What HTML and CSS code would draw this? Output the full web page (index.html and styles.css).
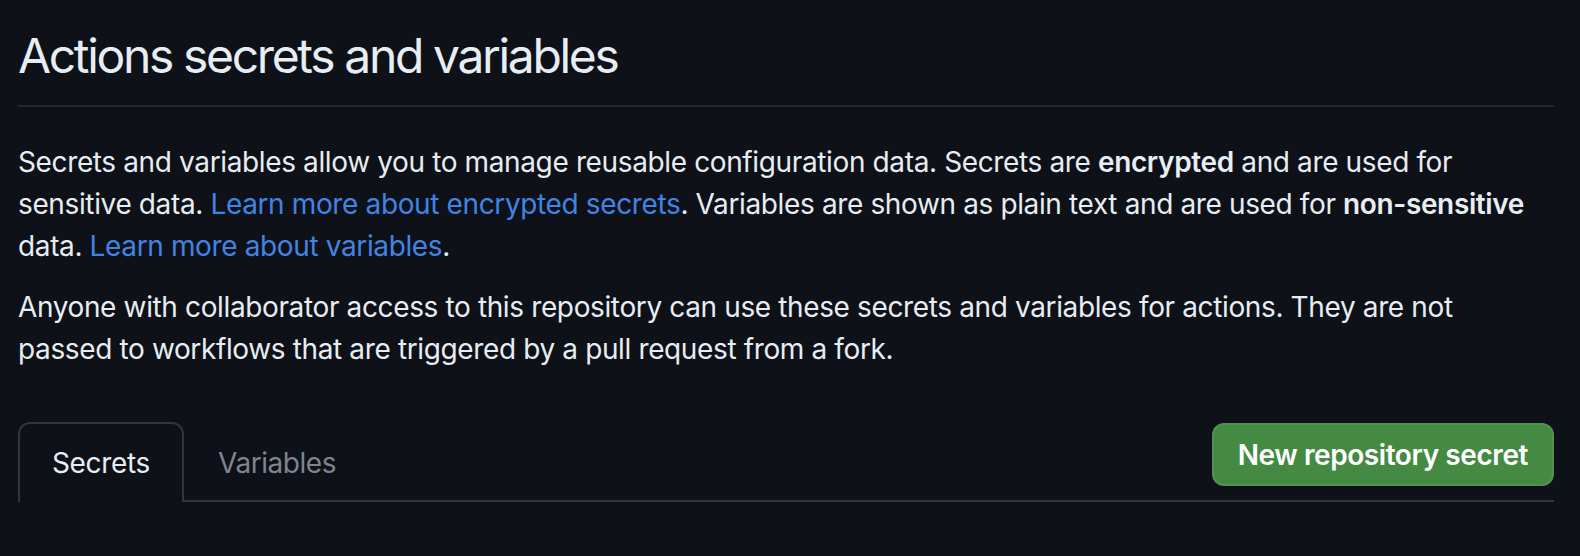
FILE: index.html
```html
<!DOCTYPE html>
<html lang="en">
<head>
<meta charset="utf-8">
<title>Actions secrets and variables</title>
<link rel="stylesheet" href="styles.css">
</head>
<body>
<main class="page">
  <div class="subhead">
    <h1 class="subhead-heading">Actions secrets and variables</h1>
  </div>
  <p class="desc">Secrets and variables allow you to manage reusable configuration data. Secrets are <strong>encrypted</strong> and are used for sensitive data. <a class="link" href="#">Learn more about encrypted secrets</a>. Variables are shown as plain text and are used for <strong>non-sensitive</strong> data. <a class="link" href="#">Learn more about variables</a>.</p>
  <p class="desc desc-last">Anyone with collaborator access to this repository can use these secrets and variables for actions. They are not passed to workflows that are triggered by a pull request from a fork.</p>
  <div class="tabnav">
    <nav class="tabnav-tabs">
      <a class="tab tab-selected" href="#">Secrets</a>
      <a class="tab" href="#">Variables</a>
    </nav>
    <button class="btn-primary" type="button">New repository secret</button>
  </div>
</main>
</body>
</html>
```
FILE: styles.css
```css
html, body {
  margin: 0;
  background: #0e1117;
}
body {
  color: #e6edf3;
  font-family: "Inter", "Liberation Sans", sans-serif;
  font-size: 28px;
  line-height: 42px;
  letter-spacing: -0.37px;
}
.page {
  padding: 26px 26px 0 18px;
}
.subhead {
  padding-bottom: 19px;
  border-bottom: 2px solid #22262c;
  margin-bottom: 34px;
}
.subhead-heading {
  margin: 0;
  font-size: 48px;
  line-height: 60px;
  font-weight: 400;
  letter-spacing: -2.35px;
}
.desc {
  margin: 0 0 19px;
  max-width: 1522px;
}
.desc-last {
  margin-bottom: 52px;
}
.desc strong {
  font-weight: 600;
}
.link {
  color: #4184e4;
  text-decoration: none;
}
.tabnav {
  display: flex;
  justify-content: space-between;
  align-items: flex-start;
  border-bottom: 2px solid #30363d;
}
.tabnav-tabs {
  display: flex;
  margin-bottom: -2px;
}
.tab {
  display: block;
  padding: 16px 32px;
  line-height: 46px;
  border: 2px solid transparent;
  border-bottom: 0;
  border-radius: 12px 12px 0 0;
  color: #7d8590;
  text-decoration: none;
  letter-spacing: -0.45px;
}
.tab-selected {
  color: #e6edf3;
  border-color: #30363d;
  background: #0e1117;
  letter-spacing: -0.34px;
}
.btn-primary {
  margin-top: 1px;
  height: 63px;
  padding: 0 24px;
  border: 2px solid rgba(240, 246, 252, 0.08);
  border-radius: 12px;
  background: #458a43;
  color: #ffffff;
  font-family: "Inter", "Liberation Sans", sans-serif;
  font-size: 28px;
  font-weight: 600;
  letter-spacing: -0.42px;
  cursor: pointer;
}
```
